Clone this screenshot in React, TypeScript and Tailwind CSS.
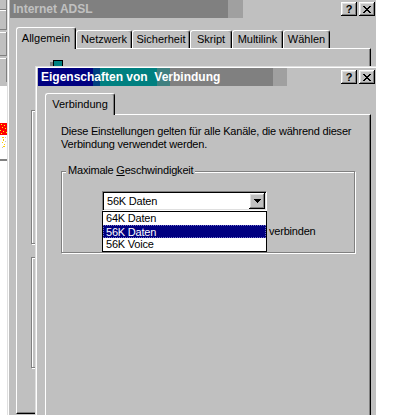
import React from 'react';

const raised =
  'bg-[#c0c0c0] shadow-[inset_-1px_-1px_#000,inset_1px_1px_#fff,inset_-2px_-2px_#808080,inset_2px_2px_#dfdfdf]';

function CloseGlyph() {
  return (
    <svg width="8" height="7" viewBox="0 0 8 7" shapeRendering="crispEdges">
      <path
        fill="#000"
        d="M0 0h2v1H0zM6 0h2v1H6zM1 1h2v1H1zM5 1h2v1H5zM2 2h4v1H2zM3 3h2v1H3zM2 4h4v1H2zM1 5h2v1H1zM5 5h2v1H5zM0 6h2v1H0zM6 6h2v1H6z"
      />
    </svg>
  );
}

function TitleButtons() {
  return (
    <div className="ml-auto flex items-center gap-[2px] pr-[1px]">
      <div className={`w-[16px] h-[14px] ${raised} flex items-center justify-center text-[11px] font-bold leading-none text-black`}>
        ?
      </div>
      <div className={`w-[16px] h-[14px] ${raised} flex items-center justify-center`}>
        <CloseGlyph />
      </div>
    </div>
  );
}

function Tab({ label, width, active }: { label: string; width: number; active?: boolean }) {
  return (
    <div
      style={{ width }}
      className={
        active
          ? 'relative z-10 -mb-px h-[22px] bg-[#c0c0c0] rounded-t-[3px] border-t border-l border-white border-r border-r-black shadow-[inset_-1px_0_#808080] flex items-center justify-center'
          : 'h-[18px] bg-[#c0c0c0] rounded-t-[3px] border-t border-l border-white border-r border-r-black shadow-[inset_-1px_0_#808080] flex items-center justify-center'
      }>
      {label}
    </div>
  );
}

function Etched({ className }: { className: string }) {
  return <div className={`border border-[#808080] shadow-[inset_1px_1px_#fff,1px_1px_#fff] ${className}`} />;
}

function LeftStrip() {
  return (
    <div className="w-[7px] shrink-0 flex flex-col">
      <div className="h-[86px] bg-[#c0c0c0] flex flex-col">
        <div className="h-[10px] border-b border-r border-[#808080]" />
        <div className="h-[20px] border-r border-b border-[#808080] shadow-[inset_0_1px_#fff]" />
        <div className="mt-[2px] h-[24px] border-r border-b border-[#808080] shadow-[inset_0_1px_#fff]" />
        <div className="mt-[2px] h-[24px] border-r border-[#808080] shadow-[inset_0_1px_#fff]" />
      </div>
      <div className="flex-1 bg-white flex flex-col">
        <svg width="7" height="26" viewBox="0 0 7 26" shapeRendering="crispEdges" className="mt-[37px]">
          <rect x="0" y="0" width="7" height="12" fill="#ff0000" />
          <path fill="#ffff00" d="M1 1h1v1H1zM4 2h1v1H4zM2 4h1v1H2zM5 5h1v1H5zM0 7h1v1H0zM3 8h1v1H3zM6 9h1v1H6zM1 10h1v1H1z" />
          <path fill="#ffcc00" d="M2 14h2v1H2zM3 16h1v2H3zM2 19h1v1H2zM4 21h1v1H4zM3 23h2v1H3z" />
          <path fill="#c0c0c0" d="M5 14h1v1H5zM5 18h1v1H5zM2 24h1v1H2z" />
        </svg>
        <div className="mt-[10px] h-[2px] bg-[#808080]" />
      </div>
    </div>
  );
}

function InnerDialog() {
  return (
    <div className="absolute left-[35px] top-[66px] w-[341px] h-[349px] bg-[#c0c0c0] border-l border-t border-[#dfdfdf] shadow-[inset_1px_1px_#fff] pl-[2px] pt-[1px] flex flex-col">
      <div className="h-[18px] shrink-0 flex items-center bg-[linear-gradient(90deg,#000080_0_55px,#004080_55px_62px,#008080_62px_119px,#408080_119px_132px,#808080_132px_235px,#a0a0a0_235px_249px,#c0c0c0_249px)]">
        <span className="pl-[3px] text-white font-bold text-[12px] whitespace-pre">Eigenschaften von  Verbindung</span>
        <TitleButtons />
      </div>

      <div className="mt-[8px] ml-[7px] h-[20px] flex items-end">
        <Tab label="Verbindung" width={70} active />
      </div>

      <div className="flex-1 ml-[7px] mr-[5px] border-l border-t border-white border-r border-r-black shadow-[inset_-1px_0_#808080] pt-[10px] pl-[15px] tracking-[-0.2px]">
        <p className="leading-[13px]">
          Diese Einstellungen gelten für alle Kanäle, die während dieser
          <br />
          Verbindung verwendet werden.
        </p>

        <div className="relative mt-[20px] w-[294px] border border-[#808080] shadow-[inset_1px_1px_#fff,1px_1px_#fff] pt-[19px] pb-[14px] pl-[40px]">
          <span className="absolute -top-[8px] left-[4px] px-[2px] bg-[#c0c0c0] leading-[13px]">
            Maximale <span className="underline underline-offset-[1px]">G</span>eschwindigkeit
          </span>

          <div className="relative w-[165px]">
            <div className="h-[20px] bg-white border border-t-[#808080] border-l-[#808080] border-b-white border-r-white shadow-[inset_1px_1px_#000,inset_-1px_-1px_#dfdfdf] flex items-center p-[1px]">
              <span className="flex-1 pl-[3px] leading-[13px]">56K Daten</span>
              <div className={`w-[16px] h-[16px] ${raised} flex items-center justify-center`}>
                <svg width="7" height="4" viewBox="0 0 7 4" shapeRendering="crispEdges">
                  <path fill="#000" d="M0 0h7v1H0zM1 1h5v1H1zM2 2h3v1H2zM3 3h1v1H3z" />
                </svg>
              </div>
            </div>

            <ul className="absolute left-0 top-full z-10 w-[165px] bg-white border border-black">
              <li className="h-[13px] leading-[13px] pl-[3px]">64K Daten</li>
              <li className="h-[13px] leading-[12px] pl-[2px] bg-[#000080] text-white border border-dotted border-[#7070c8]">56K Daten</li>
              <li className="h-[13px] leading-[13px] pl-[3px]">56K Voice</li>
            </ul>
          </div>

          <div className="mt-[14px] h-[13px] flex items-center leading-[13px]">
            <span className="w-[167px] shrink-0" />
            <span>verbinden</span>
          </div>
        </div>
      </div>
    </div>
  );
}

export default function App() {
  return (
    <div className="relative w-[400px] h-[415px] overflow-hidden bg-white flex font-['Liberation_Sans',Arial,sans-serif] text-[11px] text-black">
      <LeftStrip />

      <div className="w-[369px] shrink-0 bg-[#c0c0c0] border-l border-[#dfdfdf] shadow-[inset_1px_0_#fff] pl-[2px] flex flex-col">
        <div className="h-[18px] shrink-0 flex items-center bg-[linear-gradient(90deg,#808080_0_218px,#a0a0a0_218px_233px,#c0c0c0_233px)]">
          <span className="pl-[3px] text-[#c0c0c0] font-bold text-[12px]">Internet ADSL</span>
          <TitleButtons />
        </div>

        <div className="mt-[9px] ml-[6px] h-[21px] flex items-end">
          <Tab label="Allgemein" width={60} active />
          <Tab label="Netzwerk" width={56} />
          <Tab label="Sicherheit" width={58} />
          <Tab label="Skript" width={42} />
          <Tab label="Multilink" width={51} />
          <Tab label="Wählen" width={47} />
        </div>

        <div className="flex-1 mb-[1px] ml-[6px] mr-[5px] border-l border-t border-white border-r border-b border-r-black border-b-black shadow-[inset_-1px_-1px_#808080] flex flex-col">
          <svg width="13" height="8" viewBox="0 0 13 8" shapeRendering="crispEdges" className="mt-[11px] ml-[33px]">
            <rect x="0" y="2" width="3" height="6" fill="#808080" />
            <rect x="3" y="0" width="10" height="8" fill="#000" />
            <rect x="4" y="1" width="8" height="7" fill="#008080" />
          </svg>
          <Etched className="mt-[42px] ml-[14px] mr-[15px] h-[134px]" />
          <Etched className="mt-[13px] ml-[14px] mr-[15px] h-[111px]" />
        </div>
      </div>

      <InnerDialog />
    </div>
  );
}
